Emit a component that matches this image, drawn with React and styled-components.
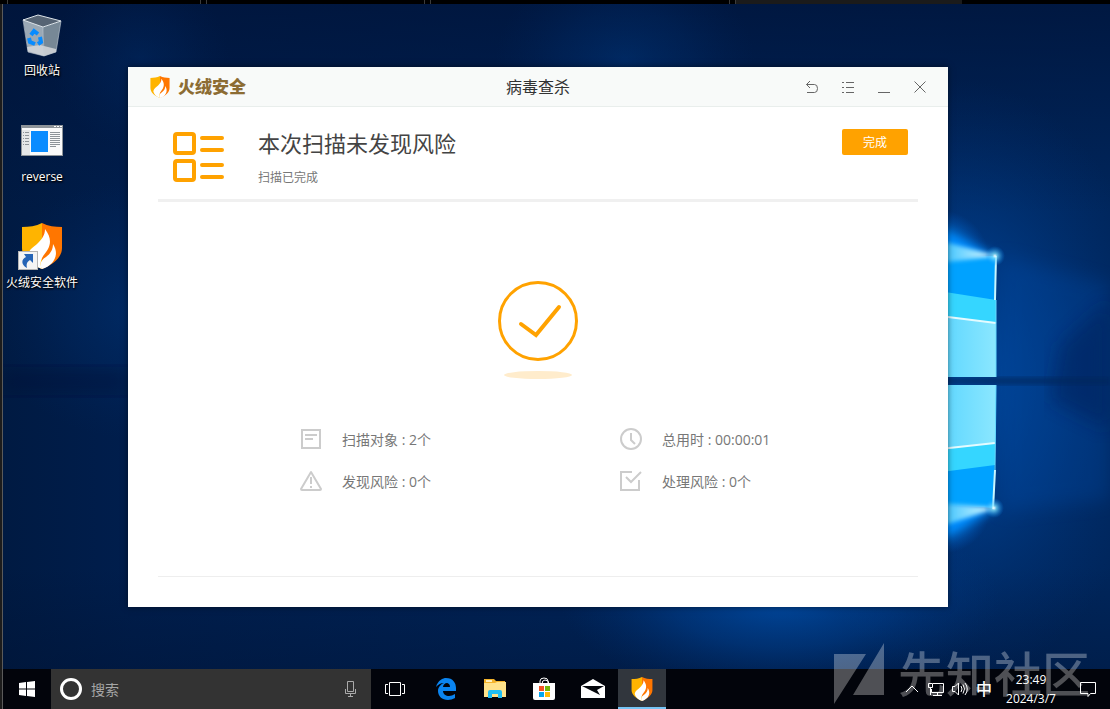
import React from 'react';
import styled, { createGlobalStyle } from 'styled-components';

const GlobalStyle = createGlobalStyle`
  * { box-sizing: border-box; }
  html, body, #root { margin: 0; height: 100%; }
  body {
    font-family: "Open Sans", "Noto Sans CJK SC", sans-serif;
    font-size: 12px;
    color: #777;
    background: #000;
  }
  button, input { font: inherit; }
`;

const Screen = styled.div`
  position: relative;
  min-height: 100vh;
  display: flex;
  flex-direction: column;
  overflow: hidden;
  isolation: isolate;
`;

const HostTabs = styled.div`
  display: flex;
  gap: 5px;
  height: 4px;
  padding-left: 7px;
  background: #000;
`;

const HostTab = styled.span`
  width: ${(p) => p.$width}px;
  background: ${(p) => (p.$active ? '#1b1b1b' : '#000')};
  border: solid #3c3c3c;
  border-width: 0 ${(p) => (p.$active ? 0 : 1)}px 0 1px;
`;

const Machine = styled.div`
  position: relative;
  flex: 1;
  display: flex;
  flex-direction: column;
  border-left: 1px solid #5a5a5a;
  margin-left: 2px;
  box-shadow: -2px 0 0 #1c1c1c;
`;

const WallpaperArt = styled.svg`
  position: absolute;
  inset: 0;
  width: 100%;
  height: 100%;
  z-index: -1;
`;

const Desktop = styled.main`
  flex: 1;
  display: flex;
`;

const Shortcuts = styled.nav`
  width: 125px;
  padding-top: 6px;
  display: flex;
  flex-direction: column;
  gap: 36px;
`;

const Shortcut = styled.a`
  width: 78px;
  display: flex;
  flex-direction: column;
  align-items: center;
  gap: 4px;
  color: #fff;
  text-decoration: none;
  line-height: 18px;
  white-space: nowrap;
  text-shadow: 0 1px 2px #000, 1px 1px 2px #000;
`;

const AppWindow = styled.section`
  flex: 1;
  margin: 63px 162px 62px 0;
  min-width: 600px;
  display: flex;
  flex-direction: column;
  background: #fff;
  box-shadow: 0 0 6px rgba(0, 0, 0, 0.5);
`;

const TitleBar = styled.header`
  display: grid;
  grid-template-columns: 1fr auto 1fr;
  align-items: center;
  height: 40px;
  padding: 0 10px 0 22px;
  background: #f8faf9;
  border-bottom: 1px solid #e9eeec;
`;

const Brand = styled.div`
  display: flex;
  align-items: center;
  gap: 8px;
  color: #8c6c33;
  font-size: 17px;
  font-weight: 900;
  line-height: 24px;
`;

const WindowTitle = styled.h1`
  margin: 0;
  padding-right: 12px;
  color: #333;
  font-size: 16px;
  font-weight: 400;
  line-height: 24px;
`;

const Controls = styled.div`
  display: flex;
  justify-content: flex-end;
`;

const ControlButton = styled.button`
  width: 36px;
  height: 36px;
  padding: 0;
  border: 0;
  background: none;
  color: #666;
  display: grid;
  place-items: center;
`;

const Content = styled.div`
  flex: 1;
  margin: 0 30px 30px;
  display: flex;
  flex-direction: column;
  border-bottom: 1px solid #eee;
`;

const Summary = styled.div`
  display: flex;
  align-items: flex-start;
  height: 95px;
  padding: 22px 10px 0 15px;
  border-bottom: 3px solid #f0f0f0;
`;

const SummaryText = styled.div`
  flex: 1;
  padding-left: 33px;
`;

const Headline = styled.h2`
  margin: 0;
  color: #444;
  font-size: 22px;
  font-weight: 400;
  line-height: 28px;
`;

const Note = styled.p`
  margin: 12px 0 0;
  line-height: 18px;
`;

const DoneButton = styled.button`
  width: 66px;
  height: 26px;
  padding: 0;
  border: 0;
  border-radius: 2px;
  background: #ffa200;
  color: #fff;
`;

const Result = styled.div`
  flex: 1;
  display: flex;
  flex-direction: column;
  justify-content: center;
  gap: 49px;
  padding-bottom: 5px;
`;

const ResultMark = styled.svg`
  align-self: center;
`;

const Stats = styled.ul`
  margin: 0;
  padding: 0 0 0 142px;
  list-style: none;
  display: grid;
  grid-template-columns: 320px 1fr;
  gap: 20px 0;
`;

const Stat = styled.li`
  display: flex;
  align-items: center;
  gap: 20px;
  height: 22px;
  font-size: 14px;
  line-height: 22px;
  white-space: nowrap;
`;

const StatText = styled.span`
  padding-top: 2px;
`;

const Taskbar = styled.footer`
  display: flex;
  height: 40px;
  background: #02040b;
  color: #fff;
`;

const TaskButton = styled.button`
  width: 48px;
  height: 40px;
  padding: 0;
  border: 0;
  border-bottom: 2px solid ${(p) => (p.$active ? '#76c4f5' : 'transparent')};
  border-top: 2px solid transparent;
  background: ${(p) => (p.$active ? '#31363d' : 'none')};
  display: grid;
  place-items: center;
`;

const SearchBox = styled.label`
  width: 320px;
  display: flex;
  align-items: center;
  gap: 8px;
  padding: 0 14px 0 8px;
  background: #333;
`;

const SearchInput = styled.input`
  flex: 1;
  min-width: 0;
  padding: 0;
  border: 0;
  outline: 0;
  background: none;
  color: #fff;
  font-size: 14px;
  &::placeholder { color: #a6a6a6; opacity: 1; }
`;

const Pinned = styled.div`
  display: flex;
  gap: 1px;
  padding-left: 3px;
`;

const Tray = styled.div`
  margin-left: auto;
  display: flex;
  align-items: center;
`;

const TrayButton = styled.button`
  width: 24px;
  height: 40px;
  padding: 0;
  border: 0;
  background: none;
  color: #fff;
  font-size: 16px;
  font-weight: 500;
  line-height: 24px;
  display: grid;
  place-items: center;
`;

const Clock = styled.time`
  width: 70px;
  text-align: center;
  line-height: 19px;
`;

const ActionButton = styled(TrayButton)`
  width: 44px;
`;

const Watermark = styled.div`
  position: absolute;
  right: 20px;
  bottom: 4px;
  display: flex;
  align-items: center;
  gap: 14px;
  height: 62px;
  color: #fff;
  opacity: 0.3;
  font-size: 48px;
  font-weight: 500;
  line-height: 62px;
  pointer-events: none;
`;

function Wallpaper() {
  return (
    <WallpaperArt viewBox="3 4 1107 705" preserveAspectRatio="xMaxYMid slice" aria-hidden="true">
      <defs>
        <linearGradient id="base" x1="0" x2="1">
          <stop offset="0" stopColor="#001a42" />
          <stop offset=".12" stopColor="#001e4d" />
          <stop offset=".5" stopColor="#002357" />
          <stop offset="1" stopColor="#00265c" />
        </linearGradient>
        <linearGradient id="top" x1="0" x2="0" y1="0" y2="1">
          <stop offset="0" stopColor="#00143a" stopOpacity=".8" />
          <stop offset=".3" stopColor="#00143a" stopOpacity="0" />
          <stop offset=".8" stopColor="#00112f" stopOpacity="0" />
          <stop offset="1" stopColor="#00112f" stopOpacity=".5" />
        </linearGradient>
        <radialGradient id="halo">
          <stop offset="0" stopColor="#0062d0" />
          <stop offset=".5" stopColor="#0050b0" stopOpacity=".6" />
          <stop offset="1" stopColor="#003a88" stopOpacity="0" />
        </radialGradient>
        <radialGradient id="flare">
          <stop offset="0" stopColor="#10bdff" />
          <stop offset=".5" stopColor="#0090ff" stopOpacity=".85" />
          <stop offset="1" stopColor="#0060d0" stopOpacity="0" />
        </radialGradient>
        <radialGradient id="spark">
          <stop offset="0" stopColor="#fff" />
          <stop offset=".25" stopColor="#7fe4ff" stopOpacity=".7" />
          <stop offset="1" stopColor="#0090ff" stopOpacity="0" />
        </radialGradient>
        <linearGradient id="pane" x1="0" x2="1">
          <stop offset="0" stopColor="#5cd6ff" />
          <stop offset="1" stopColor="#8be7ff" />
        </linearGradient>
        <linearGradient id="ray" x1="0" x2="1">
          <stop offset="0" stopColor="#10b4ff" />
          <stop offset="1" stopColor="#e4fcff" />
        </linearGradient>
        <filter id="soft"><feGaussianBlur stdDeviation="2" /></filter>
        <filter id="glow" x="-50%" y="-50%" width="200%" height="200%"><feGaussianBlur stdDeviation="5" /></filter>
        <filter id="mist"><feGaussianBlur stdDeviation="9" /></filter>
      </defs>
      <rect width="1110" height="709" fill="url(#base)" />
      <rect width="1110" height="709" fill="url(#top)" />
      <ellipse cx="625" cy="60" rx="130" ry="100" fill="url(#halo)" opacity=".2" />
      <ellipse cx="140" cy="60" rx="90" ry="90" fill="url(#halo)" opacity=".12" />
      <ellipse cx="140" cy="310" rx="160" ry="130" fill="url(#halo)" opacity=".18" />
      <ellipse cx="960" cy="380" rx="200" ry="300" fill="url(#halo)" opacity=".6" />
      <ellipse cx="780" cy="600" rx="220" ry="95" fill="url(#halo)" opacity=".6" />
      <path d="M1000 256L1110 284V500L1000 512Z" fill="#0050b0" opacity=".25" filter="url(#mist)" />
      <path d="M1110 300L1060 345L1050 400L1110 430Z" fill="#001d55" opacity=".45" filter="url(#mist)" />
      <rect y="367" width="128" height="28" fill="#001035" opacity=".35" filter="url(#mist)" />
      <rect x="940" y="377" width="170" height="8" fill="#00275c" opacity=".6" filter="url(#soft)" />
      <ellipse cx="940" cy="262" rx="50" ry="52" fill="url(#flare)" opacity=".8" />
      <ellipse cx="940" cy="510" rx="50" ry="44" fill="url(#flare)" opacity=".8" />
      <path d="M920 220L996 256L920 275Z" fill="#008cff" filter="url(#glow)" />
      <path d="M920 495L996 509L920 548Z" fill="#008cff" filter="url(#glow)" />
      <path d="M850 258L996 256V377H850Z" fill="#00a2ff" />
      <path d="M850 277L996 300V377H850Z" fill="#35d6ff" />
      <path d="M940 316L996 323V377H940Z" fill="url(#pane)" />
      <path d="M940 316L996 323" stroke="#e4fbff" strokeWidth="2" />
      <path d="M850 385H996L994 508L850 500Z" fill="#00a2ff" />
      <path d="M850 385H996L995 465L850 484Z" fill="#35d6ff" />
      <path d="M940 385H996L995 443L940 449Z" fill="url(#pane)" />
      <path d="M940 449L995 443" stroke="#e4fbff" strokeWidth="2" />
      <path d="M930 238L997 256L930 264Z" fill="url(#ray)" filter="url(#soft)" />
      <path d="M930 502L996 508L930 530Z" fill="url(#ray)" filter="url(#soft)" />
      <path d="M996 256L995 300M993 509L995 470" stroke="#c8f6ff" strokeWidth="2" />
      <path d="M996 300V377M995 470L996 385" stroke="#66d9ff" strokeWidth="1" />
      <circle cx="995" cy="256" r="10" fill="url(#spark)" />
      <circle cx="994" cy="508" r="10" fill="url(#spark)" />
    </WallpaperArt>
  );
}

function ShieldShape() {
  return (
    <>
      <path d="M20 0C14 3 7 4 0 4V25C0 34 8 41 20 46Z" fill="#ffb400" />
      <path d="M20 0C26 3 33 4 40 4V25C40 34 32 41 20 46Z" fill="#ff7600" />
      <path d="M23 6C29 14 29 20 26 26C24 30 20 33 19 38C18 41 19 43 20 46C12 43 7 38 6 32C7 26 12 24 16 20C20 16 23 12 23 6Z" fill="#fff" />
      <path d="M31 21C36 29 34 35 30 40C27 43 24 45 20 46C17 41 19 37 24 34C28 31 31 27 31 21Z" fill="#fff" />
    </>
  );
}

function Shield({ width, height }) {
  return (
    <svg width={width} height={height} viewBox="0 0 40 46" aria-hidden="true">
      <ShieldShape />
    </svg>
  );
}

function RecycleBin() {
  return (
    <svg width="48" height="48" viewBox="0 0 48 48" aria-hidden="true">
      <path d="M5 9L25 17L26 46L10 41Z" fill="#9aa8b5" />
      <path d="M25 17L43 11L38 42L26 46Z" fill="#778896" />
      <path d="M5 10L20 5L43 11L25 17Z" fill="#566474" stroke="#dce3e8" />
      <path d="M9 37L22 35L38 39V42L26 46L10 42Z" fill="#d4d7da" opacity=".85" />
      <path d="M5 10L10 42L26 46L38 42L43 11M25 17L26 46" fill="none" stroke="#c6d0d8" opacity=".6" />
      <g fill="none" stroke="#078bff" strokeWidth="4">
        <path d="M13 25L16 21L20 24" /><path d="M22 27L23 32L20 34" /><path d="M17 34L12 32L11 28" />
      </g>
    </svg>
  );
}

function ProgramIcon() {
  return (
    <svg width="48" height="48" viewBox="0 0 48 48" aria-hidden="true">
      <rect x="3.5" y="9.500" width="41" height="30" fill="#fafafa" stroke="#8e9499" />
      <path d="M3 9H45V12H3Z" fill="#8e9499" />
      <path d="M36 10.500h2m1 0h2m1 0h2" stroke="#fff" />
      <path d="M4 14H12V39H4Z" fill="#e5e7e8" />
      <rect x="13" y="15" width="17" height="21" fill="#0a8cff" />
      <path d="M5 16.500h1m1 0h4M5 19.500h1m1 0h4M5 22.500h1m1 0h4M5 25.500h1m1 0h4M5 28.500h1m1 0h4M32 16.500h10M32 18.500h10M32 20.500h10M32 22.500h10M32 24.500h10M32 26.500h10M32 28.500h10M32 30.500h6" stroke="#8e9499" />
    </svg>
  );
}

function HuorongShortcut() {
  return (
    <svg width="48" height="48" viewBox="0 0 48 48" aria-hidden="true">
      <g transform="translate(4 1)"><ShieldShape /></g>
      <rect x=".5" y="29.500" width="19" height="18" fill="#f4f4f4" stroke="#b5b5b5" />
      <path d="M6 32H15V41L12 38C9 40 8 42 9 46C3 43 3 37 8 35Z" fill="#2564b6" />
    </svg>
  );
}

const stats = [
  {
    text: '扫描对象 : 2个',
    icon: <><rect x="2" y="2" width="18" height="18" /><path d="M5 7H17M5 11H13" /></>,
  },
  {
    text: '总用时 : 00:00:01',
    icon: <><circle cx="11" cy="11" r="10" /><path d="M11 5V12L15 16" /></>,
  },
  {
    text: '发现风险 : 0个',
    icon: <><path d="M11 2L1 19Q1 20 2 20H20Q21 20 21 19Z" strokeLinejoin="round" /><path d="M11 7V14M11 16V18" /></>,
  },
  {
    text: '处理风险 : 0个',
    icon: <><path d="M12 2H1V20H19V10" /><path d="M6 7L11 12L21 2" /></>,
  },
];

export default function App() {
  return (
    <>
      <GlobalStyle />
      <Screen>
        <HostTabs>
          <HostTab $width={194} />
          <HostTab $width={219} />
          <HostTab $width={300} />
          <HostTab $width={227} $active />
        </HostTabs>
        <Machine>
          <Wallpaper />
          <Desktop>
            <Shortcuts>
              <Shortcut href="#recycle"><RecycleBin />回收站</Shortcut>
              <Shortcut href="#reverse"><ProgramIcon />reverse</Shortcut>
              <Shortcut href="#huorong"><HuorongShortcut />火绒安全软件</Shortcut>
            </Shortcuts>
            <AppWindow>
              <TitleBar>
                <Brand><Shield width={20} height={22} />火绒安全</Brand>
                <WindowTitle>病毒查杀</WindowTitle>
                <Controls>
                  <ControlButton aria-label="返回">
                    <svg width="14" height="14" viewBox="0 0 14 14" fill="none" stroke="currentColor">
                      <path d="M5 1L1.500 4.500L5 8M1.500 4.500H9.500Q12.500 4.500 12.500 8.500Q12.500 12.500 9.500 12.500H2" />
                    </svg>
                  </ControlButton>
                  <ControlButton aria-label="菜单">
                    <svg width="14" height="14" viewBox="0 0 14 14" stroke="currentColor">
                      <path d="M1 2.500h2m2 0h8M1 7.500h2m2 0h8M1 12.500h2m2 0h8" />
                    </svg>
                  </ControlButton>
                  <ControlButton aria-label="最小化">
                    <svg width="14" height="14" viewBox="0 0 14 14" stroke="currentColor">
                      <path d="M1 12.500H13" />
                    </svg>
                  </ControlButton>
                  <ControlButton aria-label="关闭">
                    <svg width="14" height="14" viewBox="0 0 14 14" stroke="currentColor">
                      <path d="M1.500 1.500L12.500 12.500M12.500 1.500L1.500 12.500" />
                    </svg>
                  </ControlButton>
                </Controls>
              </TitleBar>
              <Content>
                <Summary>
                  <svg width="52" height="56" viewBox="0 0 52 56" fill="none" stroke="#ffa200" strokeWidth="4" aria-hidden="true">
                    <rect x="2" y="5" width="19" height="19" rx="2" />
                    <rect x="2" y="32" width="19" height="19" rx="2" />
                    <path d="M29 9H49M29 21H49M29 36H49M29 48H49" strokeLinecap="round" />
                  </svg>
                  <SummaryText>
                    <Headline>本次扫描未发现风险</Headline>
                    <Note>扫描已完成</Note>
                  </SummaryText>
                  <DoneButton>完成</DoneButton>
                </Summary>
                <Result>
                  <ResultMark width="80" height="98" viewBox="0 0 80 98" fill="none" aria-hidden="true">
                    <circle cx="40" cy="40" r="38.500" stroke="#ffa200" strokeWidth="3" />
                    <path d="M23 43L38 54L61 26" stroke="#ffa200" strokeWidth="4" strokeLinecap="round" />
                    <ellipse cx="40" cy="94" rx="34" ry="4" fill="#ffeccc" />
                  </ResultMark>
                  <Stats>
                    {stats.map((s) => (
                      <Stat key={s.text}>
                        <svg width="22" height="22" viewBox="0 0 22 22" fill="none" stroke="#ccc" strokeWidth="2" aria-hidden="true">{s.icon}</svg>
                        <StatText>{s.text}</StatText>
                      </Stat>
                    ))}
                  </Stats>
                </Result>
              </Content>
            </AppWindow>
          </Desktop>
          <Taskbar>
            <TaskButton aria-label="开始">
              <svg width="16" height="16" viewBox="0 0 16 16" fill="#fff">
                <path d="M0 2L7 1V7.500H0ZM8 1L16 0V7.500H8ZM0 8.500H7V15L0 14ZM8 8.500H16V16L8 15Z" />
              </svg>
            </TaskButton>
            <SearchBox>
              <svg width="24" height="24" viewBox="0 0 24 24" aria-hidden="true">
                <circle cx="12" cy="12" r="9.500" fill="none" stroke="#fff" strokeWidth="3" />
              </svg>
              <SearchInput aria-label="搜索" placeholder="搜索" />
              <svg width="13" height="18" viewBox="0 0 13 18" fill="none" stroke="#aaa" aria-hidden="true">
                <path d="M3.500 1.500H9.500V11.500H3.500ZM1.500 9V13.500H11.500V9M6.500 14V16.500M4 16.500H9" />
              </svg>
            </SearchBox>
            <TaskButton aria-label="任务视图">
              <svg width="22" height="16" viewBox="0 0 22 16" fill="none" stroke="#fff">
                <path d="M5.500 1.500H16.500V14.500H5.500ZM4 3.500H1.500V12.500H4M18 3.500H20.500V12.500H18" />
              </svg>
            </TaskButton>
            <Pinned>
              <TaskButton aria-label="Edge">
                <svg width="22" height="22" viewBox="0 0 22 22">
                  <path d="M1 9C3 2 8 0 11 0C18 0 21 5 21 10V13H8C8 16 11 18 14 18C16 18 18 17 20 16V20C18 21 15 22 13 22C7 22 3 18 3 13C3 9 6 6 9 5C5 5 3 7 1 9ZM8 9H15C15 6 13 5 12 5C10 5 8 7 8 9Z" fill="#0a84f0" />
                </svg>
              </TaskButton>
              <TaskButton aria-label="文件资源管理器">
                <svg width="22" height="20" viewBox="0 0 22 20">
                  <path d="M0 0H10L12 2H21V6H0Z" fill="#f3b32b" />
                  <path d="M2 1H8V3H2Z" fill="#fff0bd" />
                  <path d="M0 4H11L13 3H22V18H0Z" fill="#ffe28a" />
                  <path d="M4 19V13Q4 11 6 11H16Q18 11 18 13V19H14V15H8V19Z" fill="#20bff3" />
                </svg>
              </TaskButton>
              <TaskButton aria-label="应用商店">
                <svg width="24" height="24" viewBox="0 0 24 24">
                  <path d="M8 7V4Q8 1 12 1Q16 1 16 4V7M10 7Q10 3 13 3Q17 3 17 7" fill="none" stroke="#fff" />
                  <path d="M1 6H23V21Q23 23 21 23H3Q1 23 1 21Z" fill="#fff" />
                  <path d="M7 9H12V14H7Z" fill="#f35325" /><path d="M13 9H18V14H13Z" fill="#74b90b" />
                  <path d="M7 15H12V20H7Z" fill="#05a6f0" /><path d="M13 15H18V20H13Z" fill="#ffba08" />
                </svg>
              </TaskButton>
              <TaskButton aria-label="邮件">
                <svg width="24" height="20" viewBox="0 0 24 20">
                  <path d="M0 7L12 0L24 7V19H0Z" fill="#fff" />
                  <path d="M1 7H23L16 11L19 16L9 11Z" fill="#05070d" />
                </svg>
              </TaskButton>
              <TaskButton aria-label="火绒安全" $active><Shield width={22} height={24} /></TaskButton>
            </Pinned>
            <Tray>
              <TrayButton aria-label="显示隐藏的图标">
                <svg width="14" height="8" viewBox="0 0 14 8" fill="none" stroke="#fff"><path d="M1 7L7 1L13 7" /></svg>
              </TrayButton>
              <TrayButton aria-label="网络">
                <svg width="18" height="16" viewBox="0 0 18 16" fill="none" stroke="#fff">
                  <path d="M6 2.500H16.500V11.500H4.500V8M10.500 12V14.500M6 14.500H15M1.500 2.500H5.500V6.500H1.500ZM3.500 7V14" />
                </svg>
              </TrayButton>
              <TrayButton aria-label="音量">
                <svg width="18" height="16" viewBox="0 0 18 16" fill="none" stroke="#fff">
                  <path d="M1.500 5.500H4L7.500 2V14L4 10.500H1.500ZM10 5Q12 8 10 11M12 3.500Q15 8 12 12.500M14 2Q18.500 8 14 14" />
                </svg>
              </TrayButton>
              <TrayButton>中</TrayButton>
              <Clock dateTime="2024-03-07T23:49">23:49<br />2024/3/7</Clock>
              <ActionButton aria-label="操作中心">
                <svg width="18" height="17" viewBox="0 0 18 17" fill="none" stroke="#fff">
                  <path d="M1.500 1.500H16.500V12.500H11.500L9 15.500V12.500H1.500Z" />
                </svg>
              </ActionButton>
            </Tray>
          </Taskbar>
        </Machine>
        <Watermark>
          <svg width="50" height="62" viewBox="0 0 50 62" fill="currentColor" aria-hidden="true">
            <path d="M0 11H32L0 61ZM50 0V52H19Z" />
          </svg>
          先知社区
        </Watermark>
      </Screen>
    </>
  );
}
